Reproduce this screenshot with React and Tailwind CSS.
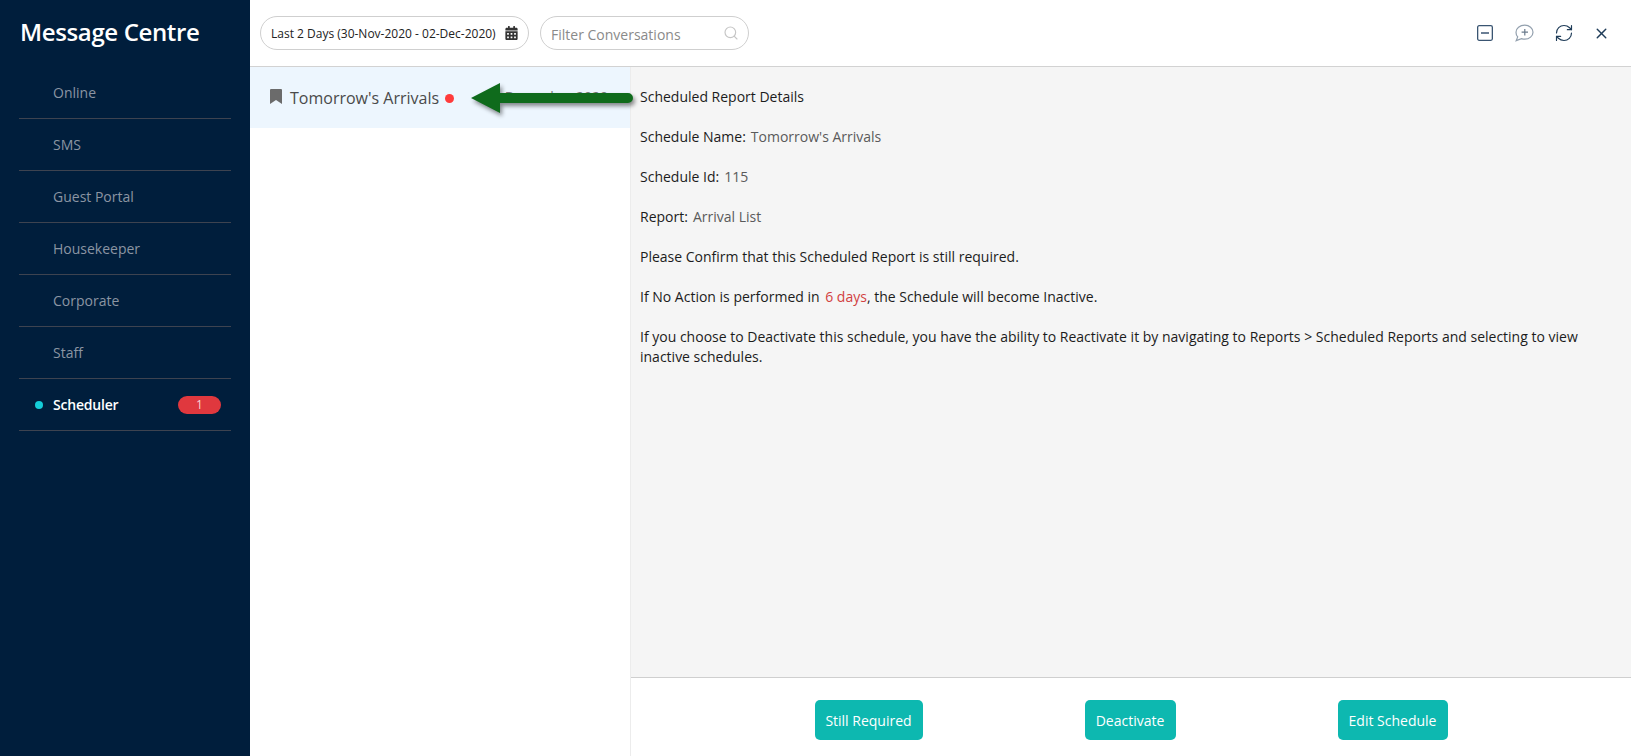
import React from 'react';
import { Search, RefreshCw, X } from 'lucide-react';
import { FaCalendarAlt } from 'react-icons/fa';

const navItems = ['Online', 'SMS', 'Guest Portal', 'Housekeeper', 'Corporate', 'Staff'];

const Sidebar = () => (
    <aside className="w-[250px] shrink-0 bg-[#001e3c]">
        <div className="h-[67px] pl-[20px] pb-[4px] flex items-center">
            <h1 className="text-[24px] font-semibold text-white leading-none tracking-[-0.37px]">Message Centre</h1>
        </div>
        <nav className="mx-[19px]">
            {navItems.map((item) => (
                <div key={item} className="h-[52px] pl-[34px] flex items-center border-b border-[#3d4350] text-[14px] text-[#8b95a3]">
                    {item}
                </div>
            ))}
            <div className="h-[52px] pl-[16px] pr-[10px] flex items-center border-b border-[#3d4350] text-[14px] font-semibold text-white">
                <span className="w-[8px] h-[8px] rounded-full bg-[#14cdd8] mr-[10px]"></span>
                <span className="flex-1 tracking-[-0.2px]">Scheduler</span>
                <span className="w-[43px] h-[18px] rounded-full bg-[#e0383e] flex items-center justify-center text-[12px] font-normal text-[#f6d5d5]">1</span>
            </div>
        </nav>
    </aside>
);

const TopBar = () => (
    <div className="h-[67px] shrink-0 bg-white border-b border-[#d2d2d2] flex items-center pl-[10px] pr-[21px]">
        <div className="w-[269px] h-[34px] rounded-full border border-[#cfcfcf] flex items-center pl-[10px] pr-[10px] justify-between">
            <span className="text-[12px] text-[#222] whitespace-nowrap pt-[1px]">Last 2 Days (30-Nov-2020 - 02-Dec-2020)</span>
            <FaCalendarAlt className="text-[#333] w-[13px] h-[14px]" />
        </div>
        <div className="w-[209px] h-[34px] rounded-full border border-[#cfcfcf] flex items-center pl-[10px] pr-[9px] justify-between ml-[11px]">
            <span className="text-[14px] text-[#8a8a8a] pt-[3px]">Filter Conversations</span>
            <Search className="text-[#c6c6c6]" size={16} strokeWidth={1.75} />
        </div>
        <div className="ml-auto flex items-center">
            <svg width="18" height="18" viewBox="0 0 18 18" fill="none" stroke="#3a5572" strokeWidth="1.3">
                <rect x="1.65" y="1.65" width="14.7" height="14.7" rx="1.5" />
                <path d="M5 9h8" strokeWidth="1.5" />
            </svg>
            <svg className="ml-[20px]" width="20" height="18" viewBox="0 0 20 18" fill="none" stroke="#93a0ae" strokeWidth="1.2">
                <path d="M10.800 1.200c4.500 0 8.200 3.100 8.200 7s-3.700 7-8.200 7c-1.200 0-2.300-.2-3.300-.6L2.200 16.600l1.500-3.700C2.600 11.700 2 10 2 8.200c0-3.900 3.800-7 8.800-7z" />
                <path d="M10.800 5v6.400M7.600 8.200H14" stroke="#6a7b8c" />
            </svg>
            <RefreshCw className="ml-[20px] text-[#1f3c58]" size={20} strokeWidth={1.4} />
            <X className="ml-[19px] text-[#1f3c58]" size={17} strokeWidth={2} />
        </div>
    </div>
);

const Label = ({ name, value }) => (
    <p className="mb-[20px]">
        {name}<span className="ml-[5px] text-[#5a5a5a]">{value}</span>
    </p>
);

const Details = () => (
    <div className="flex-1 flex flex-col border-l border-[#ececec]">
        <div className="flex-1 bg-[#f5f5f5] pl-[9px] pr-[10px] pt-[20px] text-[14px] leading-[20px] text-[#1c1c1c]">
            <p className="mb-[20px]">Scheduled Report Details</p>
            <Label name="Schedule Name:" value="Tomorrow's Arrivals" />
            <Label name="Schedule Id:" value="115" />
            <Label name="Report:" value="Arrival List" />
            <p className="mb-[20px]">Please Confirm that this Scheduled Report is still required.</p>
            <p className="mb-[20px]">
                If No Action is performed in <span className="ml-[2px] text-[#d23f3f]">6 days</span>, the Schedule will become Inactive.
            </p>
            <p>If you choose to Deactivate this schedule, you have the ability to Reactivate it by navigating to Reports &gt; Scheduled Reports and selecting to view inactive schedules.</p>
        </div>
        <div className="h-[79px] shrink-0 bg-white border-t border-[#cfcfcf] flex justify-center gap-[162px] pt-[22px]">
            <button className="w-[108px] h-[40px] rounded-[5px] bg-[#0db8b0] text-white text-[14px]">Still Required</button>
            <button className="w-[91px] h-[40px] rounded-[5px] bg-[#0db8b0] text-white text-[14px]">Deactivate</button>
            <button className="w-[110px] h-[40px] rounded-[5px] bg-[#0db8b0] text-white text-[14px]">Edit Schedule</button>
        </div>
    </div>
);

const App = () => (
    <div className="relative h-screen w-full flex overflow-hidden bg-white font-['Open_Sans',sans-serif]">
        <Sidebar />
        <main className="flex-1 flex flex-col min-w-0">
            <TopBar />
            <div className="flex-1 flex min-h-0">
                <div className="w-[380px] shrink-0 bg-white">
                    <div className="h-[61px] bg-[#edf6fe] flex items-center pl-[20px] pr-[22px]">
                        <svg className="mr-[8px] mb-[2px]" width="12" height="15" viewBox="0 0 12 15">
                            <path d="M0 1a1 1 0 0 1 1-1h10a1 1 0 0 1 1 1v14L6 11 0 15z" fill="#6b6b6b" />
                        </svg>
                        <span className="text-[16px] text-[#4a4a4a]">Tomorrow's Arrivals</span>
                        <span className="w-[9px] h-[9px] rounded-full bg-[#ff3b3b] ml-[6px] mt-[2px]"></span>
                        <span className="ml-auto mb-[2px] text-[14px] text-[#777]">December 2020</span>
                    </div>
                </div>
                <Details />
            </div>
        </main>
        {/* annotation arrow */}
        <svg className="absolute left-[466px] top-[78px] drop-shadow-[2px_3px_2px_rgba(0,0,0,0.45)]" width="172" height="40" viewBox="0 0 172 40">
            <path d="M5 20 L34 5 V15 H162 a5 5 0 0 1 0 10 H34 V35 Z" fill="#0f6b1c" />
        </svg>
    </div>
);

export default App;
